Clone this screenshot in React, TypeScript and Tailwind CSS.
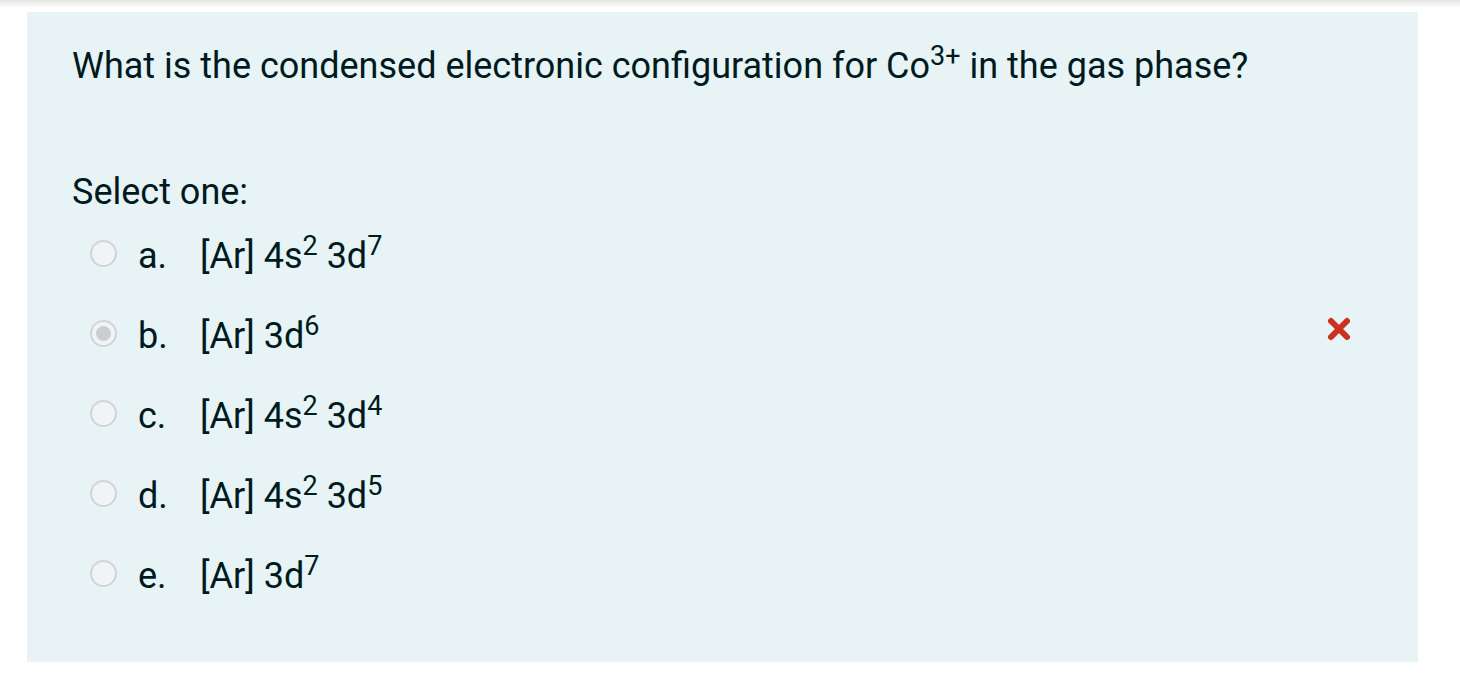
import React from "react";

type Option = {
  letter: string;
  parts: React.ReactNode;
  checked?: boolean;
  wrong?: boolean;
};

const OPTIONS: Option[] = [
  { letter: "a.", parts: <>[Ar] 4s<sup>2</sup> 3d<sup>7</sup></> },
  { letter: "b.", parts: <>[Ar] 3d<sup>6</sup></>, checked: true, wrong: true },
  { letter: "c.", parts: <>[Ar] 4s<sup>2</sup> 3d<sup>4</sup></> },
  { letter: "d.", parts: <>[Ar] 4s<sup>2</sup> 3d<sup>5</sup></> },
  { letter: "e.", parts: <>[Ar] 3d<sup>7</sup></> },
];

function Radio({ checked }: { checked?: boolean }) {
  return (
    <span className="flex h-[27px] w-[27px] shrink-0 items-center justify-center rounded-full border-2 border-[#d2d4d5] bg-[#f1f4f5]">
      {checked && <span className="h-[15px] w-[15px] rounded-full bg-[#cbcdce]" />}
    </span>
  );
}

function WrongMark() {
  return (
    <svg width="28" height="28" viewBox="0 0 28 28" className="shrink-0">
      <path
        d="M6 6 L22 22 M22 6 L6 22"
        stroke="#ca3120"
        strokeWidth="6"
        strokeLinecap="round"
      />
    </svg>
  );
}

export default function App() {
  return (
    <div className="min-h-screen bg-white font-['Roboto',sans-serif] text-[#001a1e]">
      {/* header shadow */}
      <div className="h-[8px] bg-gradient-to-b from-[#e4e4e4] to-white" />

      <div className="pl-[27px] pr-[42px] pt-[4px]">
        <div className="bg-[#e7f3f5] pl-[45px] pr-[45px] pt-[27px] pb-[59px] text-[36px] leading-[54px]">
          <p>
            What is the condensed electronic configuration for Co<sup>3+</sup> in the gas phase?
          </p>

          <p className="mt-[72px]">Select one:</p>

          <div className="mt-[10px] flex flex-col gap-[26px]">
            {OPTIONS.map((opt) => (
              <div key={opt.letter} className="flex h-[54px] items-center">
                <span className="ml-[18px] mb-[6px]">
                  <Radio checked={opt.checked} />
                </span>
                <span className="ml-[21px] w-[62px]">{opt.letter}</span>
                <span>{opt.parts}</span>
                <span className="flex-1" />
                {opt.wrong && (
                  <span className="mr-[20px] mb-[14px]">
                    <WrongMark />
                  </span>
                )}
              </div>
            ))}
          </div>
        </div>
      </div>
    </div>
  );
}
